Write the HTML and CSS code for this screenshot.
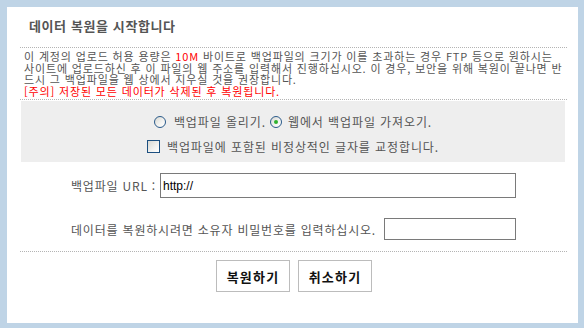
FILE: index.html
```html
<!DOCTYPE html>
<html lang="ko">
<head>
<meta charset="utf-8">
<title>데이터 복원</title>
<link rel="stylesheet" href="styles.css">
</head>
<body>
<div class="dialog">
  <div class="inner">
    <div class="header"><h1 class="title">데이터 복원을 시작합니다</h1></div>
    <div class="notice">
      <p class="line">이 계정의 업로드 허용 용량은 <span class="red">10M</span> 바이트로 백업파일의 크기가 이를 초과하는 경우 FTP 등으로 원하시는</p>
      <p class="line">사이트에 업로드하신 후 이 파일의 웹 주소를 입력해서 진행하십시오. 이 경우, 보안을 위해 복원이 끝나면 반</p>
      <p class="line">드시 그 백업파일을 웹 상에서 지우실 것을 권장합니다.</p>
      <p class="line red">[주의] 저장된 모든 데이터가 삭제된 후 복원됩니다.</p>
    </div>
    <div class="options">
      <div class="opt-row">
        <label class="opt"><input type="radio" name="src" class="radio"><span>백업파일 올리기.</span></label>
        <label class="opt opt2"><input type="radio" name="src" class="radio" checked><span>웹에서 백업파일 가져오기.</span></label>
      </div>
      <div class="opt-row">
        <label class="opt"><input type="checkbox" class="check"><span>백업파일에 포함된 비정상적인 글자를 교정합니다.</span></label>
      </div>
    </div>
    <div class="field url-row">
      <span class="label">백업파일 URL :</span>
      <input type="text" class="url-input" value="http://">
    </div>
    <div class="field pw-row">
      <span class="label">데이터를 복원하시려면 소유자 비밀번호를 입력하십시오.</span>
      <input type="password" class="pw-input">
    </div>
    <div class="buttons">
      <button class="btn">복원하기</button>
      <button class="btn">취소하기</button>
    </div>
  </div>
</div>
</body>
</html>
```

FILE: styles.css
```css
html, body {
  margin: 0;
  padding: 0;
}
body {
  background: #bfd4e6;
  width: 584px;
  height: 328px;
  padding: 7px 6px 5px 7px;
  box-sizing: border-box;
  font-family: "Noto Sans CJK KR", "Noto Sans", sans-serif;
  color: #555;
}
.dialog {
  background: #fff;
  width: 571px;
  height: 316px;
  box-sizing: border-box;
  padding: 0 11px 0 13px;
}
.inner {
  display: flex;
  flex-direction: column;
}
.header {
  height: 41px;
  box-sizing: border-box;
  border-bottom: 1px dotted #b4b4b4;
  padding: 11px 0 0 9px;
}
.title {
  margin: 0;
  font-size: 13px;
  line-height: 16px;
  font-weight: bold;
  color: #555;
  letter-spacing: 0.6px;
}
.notice {
  height: 52px;
  box-sizing: border-box;
  padding: 3px 0 0 4px;
  border-bottom: 1px dotted #b4b4b4;
}
.line {
  margin: 0;
  height: 11.7px;
  font-size: 11px;
  line-height: 11.7px;
  letter-spacing: 0.85px;
  white-space: nowrap;
}
.red {
  color: #f00;
}
.options {
  margin: 1px 2px 0 1px;
  background: #eeeeee;
  padding: 8px 0 3px;
  height: 61px;
  box-sizing: border-box;
}
.opt-row {
  height: 25px;
  display: flex;
  justify-content: center;
  align-items: center;
  font-size: 12px;
  letter-spacing: 0.9px;
}
.opt {
  display: flex;
  align-items: center;
}
.opt2 {
  margin-left: 4px;
}
.radio {
  appearance: none;
  -webkit-appearance: none;
  margin: 0 8px 0 0;
  width: 12px;
  height: 12px;
  border: 1px solid #2a5a8a;
  border-radius: 50%;
  box-sizing: border-box;
  background: linear-gradient(135deg, #d8d8d2 0%, #f4f4f2 60%, #ffffff 100%);
  position: relative;
}
.opt2 .radio {
  margin-right: 6px;
}
.radio:checked::after {
  content: "";
  position: absolute;
  left: 3px;
  top: 3px;
  width: 4px;
  height: 4px;
  border-radius: 50%;
  background: #2fb12f;
}
.check {
  appearance: none;
  -webkit-appearance: none;
  margin: 0 7px 0 0;
  width: 13px;
  height: 13px;
  border: 1px solid #1c4f80;
  box-sizing: border-box;
  background: linear-gradient(135deg, #d8d8d2 0%, #f2f2f0 60%, #ffffff 100%);
}
.field {
  display: flex;
  justify-content: center;
  align-items: center;
  font-size: 12px;
  color: #555;
}
.label {
  letter-spacing: 0.8px;
}
.url-row {
  margin-top: 11px;
  gap: 4px;
}
.pw-row {
  margin-top: 20px;
  gap: 8px;
}
.url-input {
  width: 356px;
  height: 25px;
  box-sizing: border-box;
  border: 1px solid #7a7a7a;
  padding: 0 2px;
  margin: 0;
  font-family: "Liberation Sans", Arial, sans-serif;
  font-size: 12px;
  color: #000;
  outline: none;
}
.pw-input {
  width: 132px;
  height: 22px;
  box-sizing: border-box;
  border: 1px solid #7a7a7a;
  padding: 0 2px;
  margin: 0;
  outline: none;
}
.buttons {
  margin-top: 11px;
  border-top: 1px dotted #b4b4b4;
  padding-top: 8px;
  display: flex;
  justify-content: center;
  gap: 8px;
}
.btn {
  width: 74px;
  height: 32px;
  background: #fff;
  border: 1px solid #bcbcbc;
  margin: 0;
  padding: 0 0 0 1px;
  font-family: "Noto Sans CJK KR", "Noto Sans", sans-serif;
  font-size: 13px;
  font-weight: bold;
  letter-spacing: 1.2px;
  color: #111;
}
```
